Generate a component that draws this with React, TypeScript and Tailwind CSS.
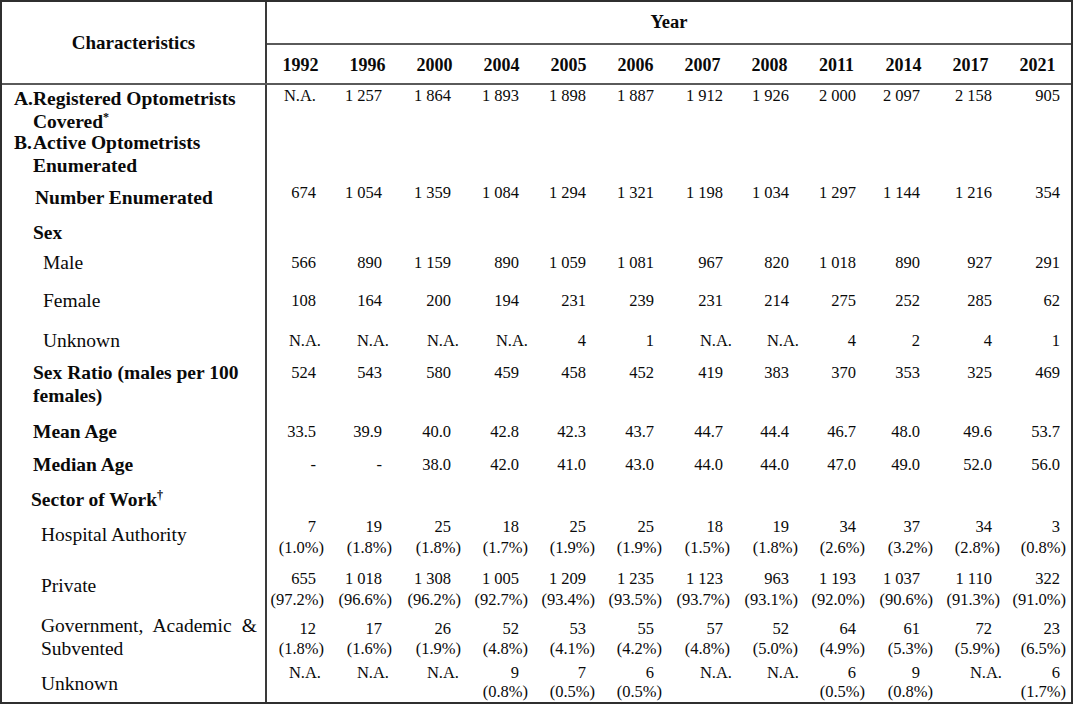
import React from "react";

const YEARS = ["1992", "1996", "2000", "2004", "2005", "2006", "2007", "2008", "2011", "2014", "2017", "2021"];

const NUM_PR = ["pr-[18px]", "pr-[19px]", "pr-[17px]", "pr-[16px]", "pr-[16px]", "pr-[15px]", "pr-[13px]", "pr-[14px]", "pr-[14px]", "pr-[17px]", "pr-[12px]", "pr-[11px]"];
const PCT_PR = ["pr-[10px]", "pr-[9px]", "pr-[7px]", "pr-[7px]", "pr-[7px]", "pr-[7px]", "pr-[6px]", "pr-[5px]", "pr-[5px]", "pr-[4px]", "pr-[4px]", "pr-[5px]"];
const NA_PR = ["pr-[13px]", "pr-[12px]", "pr-[9px]", "pr-[7px]", "pr-[7px]", "pr-[6px]", "pr-[4px]", "pr-[4px]", "pr-[4px]", "pr-[4px]", "pr-[2px]", "pr-[4px]"];

type Cell = string | [string, string] | [string];

type RowDef = {
  h: string;
  labelPt: string;
  dataPt: string;
  label: React.ReactNode;
  data?: Cell[];
  lead?: string;
  naKind?: boolean;
};

const split = (s: string): Cell[] => s.split("|");

const pct = (s: string): Cell[] =>
  s.split("|").map((c) => {
    const p = c.split(";");
    return p.length === 2 ? ([p[0], p[1]] as [string, string]) : ([p[0]] as [string]);
  });

const L = "text-[19.5px] leading-[22.5px]";

const rows: RowDef[] = [
  {
    h: "h-[47px]",
    labelPt: "pt-[3px]",
    dataPt: "pt-[0px]",
    label: (
      <div className={`flex pl-[12px] font-bold ${L}`}>
        <span className="w-[19px] shrink-0">A.</span>
        <span className="w-[220px]">
          Registered Optometrists Covered<span className="text-[12px] leading-none align-[7px]">*</span>
        </span>
      </div>
    ),
    data: split("N.A.|1 257|1 864|1 893|1 898|1 887|1 912|1 926|2 000|2 097|2 158|905"),
  },
  {
    h: "h-[46px]",
    labelPt: "pt-[0px]",
    dataPt: "pt-[0px]",
    label: (
      <div className={`flex pl-[12px] font-bold ${L}`}>
        <span className="w-[19px] shrink-0">B.</span>
        <span className="w-[220px]">Active Optometrists Enumerated</span>
      </div>
    ),
  },
  {
    h: "h-[42px]",
    labelPt: "pt-[9px]",
    dataPt: "pt-[4px]",
    label: <div className={`pl-[33px] font-bold ${L}`}>Number Enumerated</div>,
    data: split("674|1 054|1 359|1 084|1 294|1 321|1 198|1 034|1 297|1 144|1 216|354"),
  },
  {
    h: "h-[28px]",
    labelPt: "pt-[2px]",
    dataPt: "pt-[0px]",
    label: <div className={`pl-[31px] font-bold ${L}`}>Sex</div>,
  },
  {
    h: "h-[35px]",
    labelPt: "pt-[4px]",
    dataPt: "pt-[4px]",
    label: <div className={`pl-[41px] ${L}`}>Male</div>,
    data: split("566|890|1 159|890|1 059|1 081|967|820|1 018|890|927|291"),
  },
  {
    h: "h-[38px]",
    labelPt: "pt-[7px]",
    dataPt: "pt-[7px]",
    label: <div className={`pl-[41px] ${L}`}>Female</div>,
    data: split("108|164|200|194|231|239|231|214|275|252|285|62"),
  },
  {
    h: "h-[38px]",
    labelPt: "pt-[9px]",
    dataPt: "pt-[9px]",
    label: <div className={`pl-[41px] ${L}`}>Unknown</div>,
    data: split("N.A.|N.A.|N.A.|N.A.|4|1|N.A.|N.A.|4|2|4|1"),
    naKind: true,
  },
  {
    h: "h-[51px]",
    labelPt: "pt-[3px]",
    dataPt: "pt-[3px]",
    label: <div className={`pl-[31px] pr-[20px] font-bold ${L}`}>Sex Ratio (males per 100 females)</div>,
    data: split("524|543|580|459|458|452|419|383|370|353|325|469"),
  },
  {
    h: "h-[40px]",
    labelPt: "pt-[11px]",
    dataPt: "pt-[11px]",
    label: <div className={`pl-[31px] font-bold ${L}`}>Mean Age</div>,
    data: split("33.5|39.9|40.0|42.8|42.3|43.7|44.7|44.4|46.7|48.0|49.6|53.7"),
  },
  {
    h: "h-[33px]",
    labelPt: "pt-[4px]",
    dataPt: "pt-[4px]",
    label: <div className={`pl-[31px] font-bold ${L}`}>Median Age</div>,
    data: split("-|-|38.0|42.0|41.0|43.0|44.0|44.0|47.0|49.0|52.0|56.0"),
  },
  {
    h: "h-[30px]",
    labelPt: "pt-[6px]",
    dataPt: "pt-[6px]",
    label: (
      <div className={`pl-[29px] font-bold ${L}`}>
        Sector of Work<span className="text-[12px] leading-none align-[7px]">†</span>
      </div>
    ),
  },
  {
    h: "h-[50px]",
    labelPt: "pt-[11px]",
    dataPt: "pt-[3px]",
    label: <div className={`pl-[39px] ${L}`}>Hospital Authority</div>,
    data: pct("7;(1.0%)|19;(1.8%)|25;(1.8%)|18;(1.7%)|25;(1.9%)|25;(1.9%)|18;(1.5%)|19;(1.8%)|34;(2.6%)|37;(3.2%)|34;(2.8%)|3;(0.8%)"),
  },
  {
    h: "h-[50px]",
    labelPt: "pt-[12px]",
    dataPt: "pt-[5px]",
    label: <div className={`pl-[39px] ${L}`}>Private</div>,
    data: pct("655;(97.2%)|1 018;(96.6%)|1 308;(96.2%)|1 005;(92.7%)|1 209;(93.4%)|1 235;(93.5%)|1 123;(93.7%)|963;(93.1%)|1 193;(92.0%)|1 037;(90.6%)|1 110;(91.3%)|322;(91.0%)"),
  },
  {
    h: "h-[50px]",
    labelPt: "pt-[2px]",
    dataPt: "pt-[6px]",
    lead: "leading-[20px]",
    label: (
      <div className="pl-[39px]">
        <div className={`w-[216px] text-justify ${L}`}>Government, Academic &amp; Subvented</div>
      </div>
    ),
    data: pct("12;(1.8%)|17;(1.6%)|26;(1.9%)|52;(4.8%)|53;(4.1%)|55;(4.2%)|57;(4.8%)|52;(5.0%)|64;(4.9%)|61;(5.3%)|72;(5.9%)|23;(6.5%)"),
  },
  {
    h: "h-[39px]",
    labelPt: "pt-[10px]",
    dataPt: "pt-[0px]",
    lead: "leading-[19px]",
    label: <div className={`pl-[39px] ${L}`}>Unknown</div>,
    data: pct("N.A.|N.A.|N.A.|9;(0.8%)|7;(0.5%)|6;(0.5%)|N.A.|N.A.|6;(0.5%)|9;(0.8%)|N.A.|6;(1.7%)"),
    naKind: true,
  },
];

function DataCell({ cell, i, naKind }: { cell: Cell; i: number; naKind?: boolean }) {
  if (typeof cell === "string") {
    const pr = cell === "N.A." && naKind ? NA_PR[i] : NUM_PR[i];
    return <div className={`text-right ${pr}`}>{cell}</div>;
  }
  if (cell.length === 1) {
    const pr = cell[0] === "N.A." ? NA_PR[i] : NUM_PR[i];
    return <div className={`text-right ${pr}`}>{cell[0]}</div>;
  }
  return (
    <div className="flex flex-col items-end">
      <div className={`text-right ${NUM_PR[i]}`}>{cell[0]}</div>
      <div className={`text-right ${PCT_PR[i]}`}>{cell[1]}</div>
    </div>
  );
}

export default function App() {
  return (
    <div className="w-[1077px] h-[711px] bg-white text-[#0a0a0a] font-['Liberation_Serif','Times_New_Roman',serif]">
      <div className="w-[1073px] h-[704px] border-2 border-[#2f2f2f] flex flex-col">
        {/* Header */}
        <div className="flex h-[83px] shrink-0 border-b-2 border-[#5a5a5a]">
          <div className="w-[265px] shrink-0 border-r-2 border-[#3a3a3a] flex items-center justify-center pt-[2px] font-bold text-[19px]">
            Characteristics
          </div>
          <div className="flex-1 flex flex-col">
            <div className="h-[43px] shrink-0 border-b-2 border-[#5a5a5a] flex items-center justify-center font-bold text-[18.5px]">
              Year
            </div>
            <div className="flex-1 grid grid-cols-12 items-center pt-[3px]">
              {YEARS.map((y) => (
                <div key={y} className="text-center font-bold text-[18px]">
                  {y}
                </div>
              ))}
            </div>
          </div>
        </div>
        {/* Body */}
        <div className="flex-1 flex flex-col">
          {rows.map((r, ri) => (
            <div key={ri} className={`flex shrink-0 ${r.h}`}>
              <div className={`w-[265px] shrink-0 border-r-2 border-[#3a3a3a] ${r.labelPt}`}>{r.label}</div>
              <div className={`flex-1 grid grid-cols-12 items-start text-[16.5px] ${r.lead ?? "leading-[21px]"} ${r.dataPt}`}>
                {r.data?.map((c, i) => <DataCell key={i} cell={c} i={i} naKind={r.naKind} />)}
              </div>
            </div>
          ))}
        </div>
      </div>
    </div>
  );
}
